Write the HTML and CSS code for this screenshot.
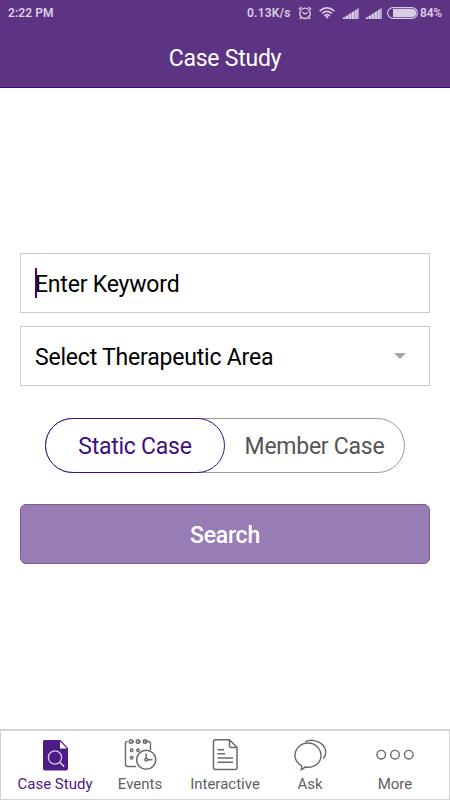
FILE: index.html
```html
<!DOCTYPE html>
<html lang="en">
<head>
<meta charset="utf-8">
<title>Case Study</title>
<link rel="stylesheet" href="styles.css">
</head>
<body>
<div class="app">
  <header class="header">
    <div class="status">
      <span class="time">2:22 PM</span>
      <span class="speed">0.13K/s</span>
      <svg class="alarm" width="14" height="14" viewBox="0 0 14 14" fill="none" stroke="currentColor"><circle cx="7" cy="7.3" r="5.2" stroke-width="1.4"/><path d="M4.5 6.2L7 8l2.8-1.8" stroke-width="1.3"/><path d="M.8 3.4L3.4 1M13.2 3.4L10.600 1M3 11.500L1.900 13M11 11.500l1.100 1.500" stroke-width="1.300"/></svg>
      <svg class="wifi" width="16" height="12" viewBox="0 0 16 12" fill="none" stroke="currentColor" stroke-width="1.600"><path d="M.6 4.100Q8-2.300 15.400 4.100M3 6.500Q8 2.200 13 6.500M5.300 8.800Q8 6.500 10.700 8.800"/><path d="M6.300 9.700Q8 8.500 9.700 9.700L8 11.700Z" fill="currentColor" stroke="none"/></svg>
      <svg class="signal" width="17" height="11" viewBox="0 0 17 11" fill="currentColor"><path d="M.5 11V10L16.500 0V11Z" opacity=".6"/><path d="M1 9.700h2V11H1zM4 8h2v3H4zM7 6h2v5H7zM10 4h2v7h-2zM13 2h1.500v9H13zM15.500.5h1V11h-1z"/></svg>
      <svg class="signal second" width="17" height="11" viewBox="0 0 17 11" fill="currentColor"><path d="M.5 11V10L16.500 0V11Z" opacity=".6"/><path d="M1 9.700h2V11H1zM4 8h2v3H4zM7 6h2v5H7zM10 4h2v7h-2zM13 2h1.500v9H13zM15.500.5h1V11h-1z"/></svg>
      <svg class="battery" width="31" height="12" viewBox="0 0 31 12"><rect x=".6" y=".6" width="29.800" height="10.800" rx="5.400" fill="none" stroke="currentColor" stroke-width="1.100"/><path d="M6 2H25.200a4 4 0 0 1 0 8H6Z" fill="currentColor"/></svg>
      <span class="percent">84%</span>
    </div>
    <h1 class="title">Case Study</h1>
  </header>
  <main class="form">
    <div class="field"><i class="caret"></i><span class="keyword">Enter Keyword</span></div>
    <div class="field select"><span class="area">Select Therapeutic Area</span><svg class="arrow" width="12" height="6" viewBox="0 0 12 6"><path d="M0 0H12L6 6Z" fill="#a5a5a5"/></svg></div>
    <div class="toggle">
      <div class="option active"><span>Static Case</span></div>
      <div class="option member"><span>Member Case</span></div>
    </div>
    <div class="search">Search</div>
  </main>
  <nav class="tabs">
    <div class="tab current">
      <svg width="34" height="34" viewBox="0 0 34 34"><path d="M6.500 2H22.500L30 10V30.500a2 2 0 0 1-2 2H7a2 2 0 0 1-2-2V3.500A1.500 1.500 0 0 1 6.500 2Z" fill="#4c1c86"/><path d="M22 3.500V10.500H29Z" fill="#fff"/><circle cx="17" cy="19.500" r="6.600" fill="none" stroke="#d8cbe5" stroke-width="1.300"/><path d="M22 24.500l4.200 4.200" stroke="#d8cbe5" stroke-width="1.600"/></svg>
      <span>Case Study</span>
    </div>
    <div class="tab">
      <svg width="34" height="34" viewBox="0 0 34 34" fill="none" stroke="#696969" stroke-width="1.400"><path d="M4.500 3.500H4a1.500 1.500 0 0 0-1.500 1.500V26.500A2 2 0 0 0 4.500 28.500H13M8.500 3.500H11M15 3.500H17.500M21.500 3.500H25.500a2 2 0 0 1 2 2V12"/><circle cx="8" cy="3.500" r="1.800"/><circle cx="15" cy="3.500" r="1.800"/><circle cx="22" cy="3.500" r="1.800"/><circle cx="8.700" cy="12.300" r="1.300"/><circle cx="15" cy="12.300" r="1.300"/><circle cx="8.700" cy="19.800" r="1.300"/><circle cx="23.200" cy="21.700" r="9.500" stroke-width="1.500" fill="#fff"/><path d="M23.200 15.500V20.200M24.700 21.700H29.500"/><circle cx="23.200" cy="21.700" r="1.400"/></svg>
      <span>Events</span>
    </div>
    <div class="tab">
      <svg width="34" height="34" viewBox="0 0 34 34" fill="none" stroke="#696969" stroke-width="1.500"><path d="M7 1.700H21.500L29 9.500V29.500a2 2 0 0 1-2 2H7.500a2 2 0 0 1-2-2V3.200A1.500 1.500 0 0 1 7 1.700ZM21.500 1.700V7.500a2 2 0 0 0 2 2H29M9.500 11.700H16M9.500 15.800H17M9.500 20H25M9.500 24.200H25"/></svg>
      <span>Interactive</span>
    </div>
    <div class="tab">
      <svg width="34" height="34" viewBox="0 0 34 34" fill="none" stroke="#696969" stroke-width="1.400"><path d="M8.300 27.400C4.500 25.200 2 21.600 2 17.500C2 10.600 7.800 5 15 5S28 10.600 28 17.500S22.200 29.300 15 29.300C14 29.300 13 29.200 12 29C10.800 30.500 9.800 31 8.300 31.500C8.900 30.300 8.800 28.600 8.300 27.400Z"/><path d="M12.500 3.700C15 2.300 18.300 1.900 21.600 2.600C28 3.800 32.700 8.700 32.700 14.300C32.700 16.600 31.700 19 30.300 20.800"/></svg>
      <span>Ask</span>
    </div>
    <div class="tab">
      <svg width="40" height="34" viewBox="0 0 40 34" fill="none" stroke="#696969" stroke-width="1.400"><circle cx="6.200" cy="16.700" r="4.300"/><circle cx="20" cy="16.700" r="4.300"/><circle cx="33.800" cy="16.700" r="4.300"/></svg>
      <span>More</span>
    </div>
  </nav>
</div>
</body>
</html>
```
FILE: styles.css
```css
* { box-sizing: border-box; }
body { margin: 0; background: #fff; font-family: Roboto, "Liberation Sans", sans-serif; }
.app { width: 450px; height: 800px; display: flex; flex-direction: column; }
.header { height: 88px; background: #5d3484; border-bottom: 1px solid #470575; color: #fff; }
.status { height: 26px; display: flex; align-items: center; padding-left: 8px; color: #d9cde3; font-size: 12px; font-weight: 600; }
.time { width: 239px; letter-spacing: .1px; }
.speed { width: 51px; letter-spacing: .2px; }
.wifi { margin-left: 7px; }
.signal { margin-left: 7px; }
.second { margin-left: 6px; }
.battery { margin-left: 5px; }
.percent { margin-left: 2px; letter-spacing: -.2px; }
.title { margin: 18px 0 0; text-align: center; font-size: 23px; font-weight: 400; line-height: 30px; letter-spacing: -.25px; }
.form { flex: 1; padding: 165px 20px 0; }
.field { height: 60px; border: 1px solid #ccc; display: flex; align-items: center; padding: 2px 23px 0 14px; font-size: 23px; letter-spacing: -.2px; color: #000; }
.caret { width: 2px; height: 30px; background: #4b0082; margin-right: -2px; margin-top: -2px; }
.select { margin-top: 13px; justify-content: space-between; }
.arrow { margin-top: -2px; }
.toggle { height: 55px; width: 360px; margin: 32px auto 0; border: 1px solid #999; border-radius: 28px; display: flex; font-size: 23px; letter-spacing: -.25px; }
.option { flex: 1; display: flex; align-items: center; justify-content: center; padding-top: 2px; color: #555; }
.active { flex: 0 0 180px; margin: -1px 0 -1px -1px; border: 1px solid #40107c; border-radius: 28px; color: #40107c; }
.search { height: 60px; margin-top: 31px; border: 1px solid #7d5a9c; border-radius: 6px; background: #987db4; color: #fff; font-size: 23px; letter-spacing: -.25px; font-weight: 500; line-height: 61px; text-align: center; }
.tabs { height: 71px; border: solid #d2d2d2; border-width: 2px 1px 1px; display: flex; padding: 7px 13px 0 11px; justify-content: space-between; }
.tab { width: 85px; flex: none; display: flex; flex-direction: column; align-items: center; color: #5f5f5f; font-size: 15px; line-height: 20px; }
.tab span { margin-top: 2px; padding-left: 1px; }
.current { color: #4b1886; }
```
